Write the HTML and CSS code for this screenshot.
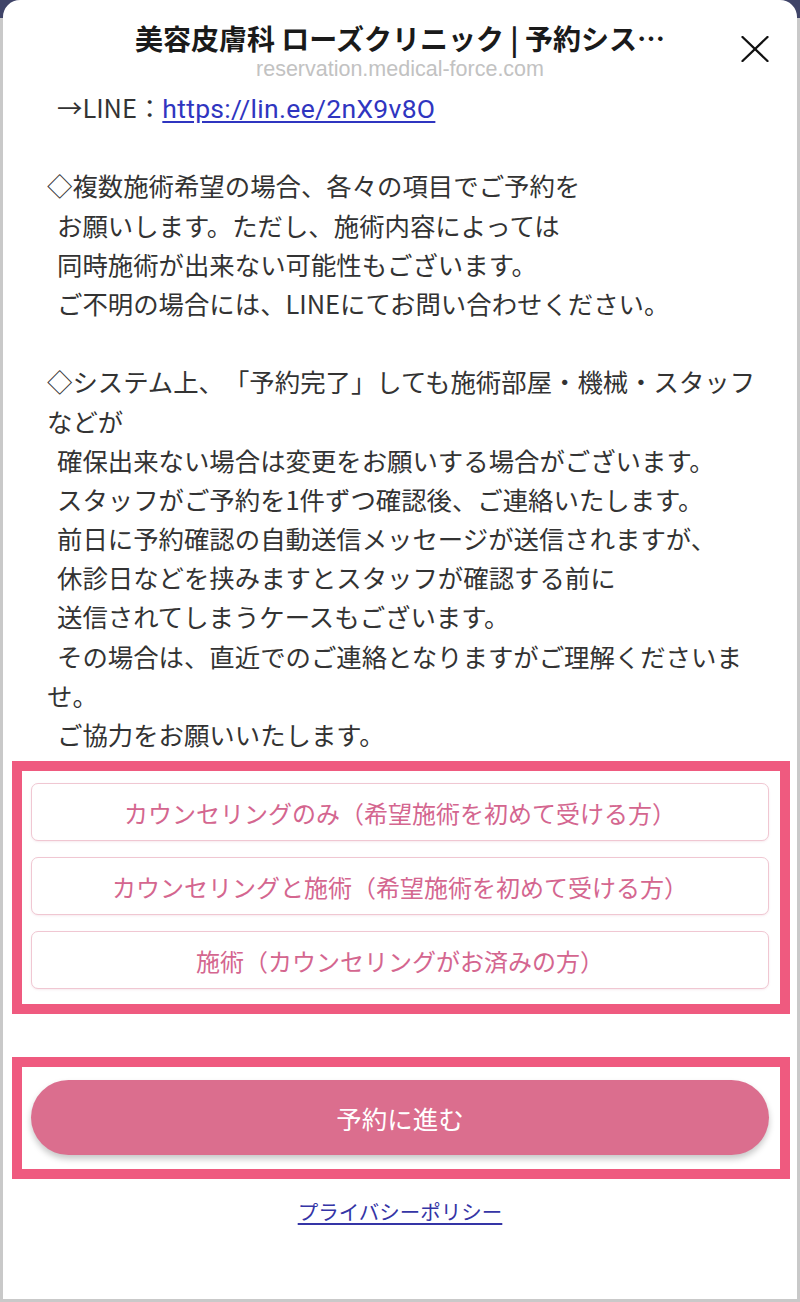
FILE: index.html
```html
<!DOCTYPE html>
<html lang="ja">
<head>
<meta charset="utf-8">
<title>美容皮膚科 ローズクリニック | 予約システム</title>
<link rel="stylesheet" href="styles.css">
</head>
<body>
<div class="screen">
  <header class="header">
    <div class="spacer"></div>
    <div class="titles">
      <div class="title">美容皮膚科 ローズクリニック | 予約シス…</div>
      <div class="url">reservation.medical-force.com</div>
    </div>
    <div class="close" aria-label="閉じる">
      <svg width="28" height="26" viewBox="0 0 28 26"><path d="M1.5 1 L26.5 25 M26.5 1 L1.5 25" stroke="#111" stroke-width="2.3" fill="none" stroke-linecap="round"/></svg>
    </div>
  </header>

  <main class="content">
    <div class="notes">
      <div class="ln ind">→LINE：<a class="line-link" href="#">https://lin.ee/2nX9v8O</a></div>
      <div class="ln blank"></div>
      <div class="ln">◇複数施術希望の場合、各々の項目でご予約を</div>
      <div class="ln ind">お願いします。ただし、施術内容によっては</div>
      <div class="ln ind">同時施術が出来ない可能性もございます。</div>
      <div class="ln ind">ご不明の場合には、LINEにてお問い合わせください。</div>
      <div class="ln blank"></div>
      <div class="ln">◇システム上、「予約完了」しても施術部屋・機械・スタッフ</div>
      <div class="ln">などが</div>
      <div class="ln ind">確保出来ない場合は変更をお願いする場合がございます。</div>
      <div class="ln ind">スタッフがご予約を1件ずつ確認後、ご連絡いたします。</div>
      <div class="ln ind">前日に予約確認の自動送信メッセージが送信されますが、</div>
      <div class="ln ind">休診日などを挟みますとスタッフが確認する前に</div>
      <div class="ln ind">送信されてしまうケースもございます。</div>
      <div class="ln ind">その場合は、直近でのご連絡となりますがご理解くださいま</div>
      <div class="ln">せ。</div>
      <div class="ln ind">ご協力をお願いいたします。</div>
    </div>

    <section class="highlight choices">
      <button class="choice">カウンセリングのみ（希望施術を初めて受ける方）</button>
      <button class="choice">カウンセリングと施術（希望施術を初めて受ける方）</button>
      <button class="choice">施術（カウンセリングがお済みの方）</button>
    </section>

    <section class="highlight proceed">
      <button class="pill">予約に進む</button>
    </section>

    <div class="footer">
      <a class="privacy" href="#">プライバシーポリシー</a>
    </div>
  </main>
</div>
</body>
</html>
```

FILE: styles.css
```css
html, body {
  margin: 0;
  padding: 0;
}
body {
  width: 800px;
  height: 1302px;
  background: linear-gradient(#3f4468 0, #3f4468 18px, #c9c9c9 18px, #c9c9c9 100%);
  font-family: "Noto Sans CJK JP", "Noto Sans", sans-serif;
  text-spacing-trim: space-all;
  box-sizing: border-box;
  padding: 0 3px 3px 3px;
  overflow: hidden;
}
.screen {
  height: 1299px;
  background: #fff;
  border-radius: 17px 17px 0 0;
  overflow: hidden;
}

.header {
  height: 88px;
  box-sizing: border-box;
  display: grid;
  grid-template-columns: 1fr auto 1fr;
  align-items: start;
  padding-top: 22px;
}
.titles {
  text-align: center;
}
.title {
  font-size: 28px;
  font-weight: 700;
  color: #1a1a1a;
  line-height: 32px;
  white-space: nowrap;
}
.url {
  font-family: "Liberation Sans", Arial, sans-serif;
  font-size: 21.5px;
  color: #c2c2c2;
  line-height: 24px;
  margin-top: 3px;
}
.close {
  justify-self: end;
  margin-right: 28px;
  margin-top: 14px;
  width: 28px;
  height: 26px;
}
.close svg {
  display: block;
}

.content {
  display: flex;
  flex-direction: column;
}
.notes {
  padding-left: 44px;
  font-size: 25.4px;
  color: #333;
  line-height: 39.2px;
}
.ln {
  white-space: nowrap;
  height: 39.2px;
}
.ind {
  padding-left: 10px;
}
.line-link {
  font-family: "Roboto", "Liberation Sans", sans-serif;
  font-size: 26.5px;
  color: #2f35c0;
  text-decoration: underline;
  text-underline-offset: 3px;
  letter-spacing: 0.3px;
}

.highlight {
  border: 10px solid #ef5a7f;
  margin: 0 7px 0 9px;
}
.choices {
  margin-top: 7px;
  display: flex;
  flex-direction: column;
  gap: 16px;
  padding: 12px 11px 15px 9px;
}
.choice {
  height: 58px;
  border: 1.5px solid #f0c7d2;
  border-radius: 7px;
  background: #fff;
  color: #d4668f;
  font-family: "Noto Sans CJK JP", sans-serif;
  text-spacing-trim: space-all;
  font-size: 24px;
  padding: 0;
  box-shadow: 0 1px 2px rgba(200, 120, 150, 0.15);
}

.proceed {
  margin-top: 43px;
  padding: 13px 11px 14px 9px;
}
.pill {
  width: 100%;
  height: 75px;
  border: none;
  border-radius: 38px;
  background: #db6e8e;
  color: #fff;
  font-family: "Noto Sans CJK JP", sans-serif;
  font-size: 25.5px;
  box-shadow: 0 4px 6px rgba(0, 0, 0, 0.22);
}

.footer {
  text-align: center;
  margin-top: 17px;
}
.privacy {
  font-size: 20.5px;
  color: #3535a6;
  text-decoration: underline;
  text-underline-offset: 3px;
}
```
